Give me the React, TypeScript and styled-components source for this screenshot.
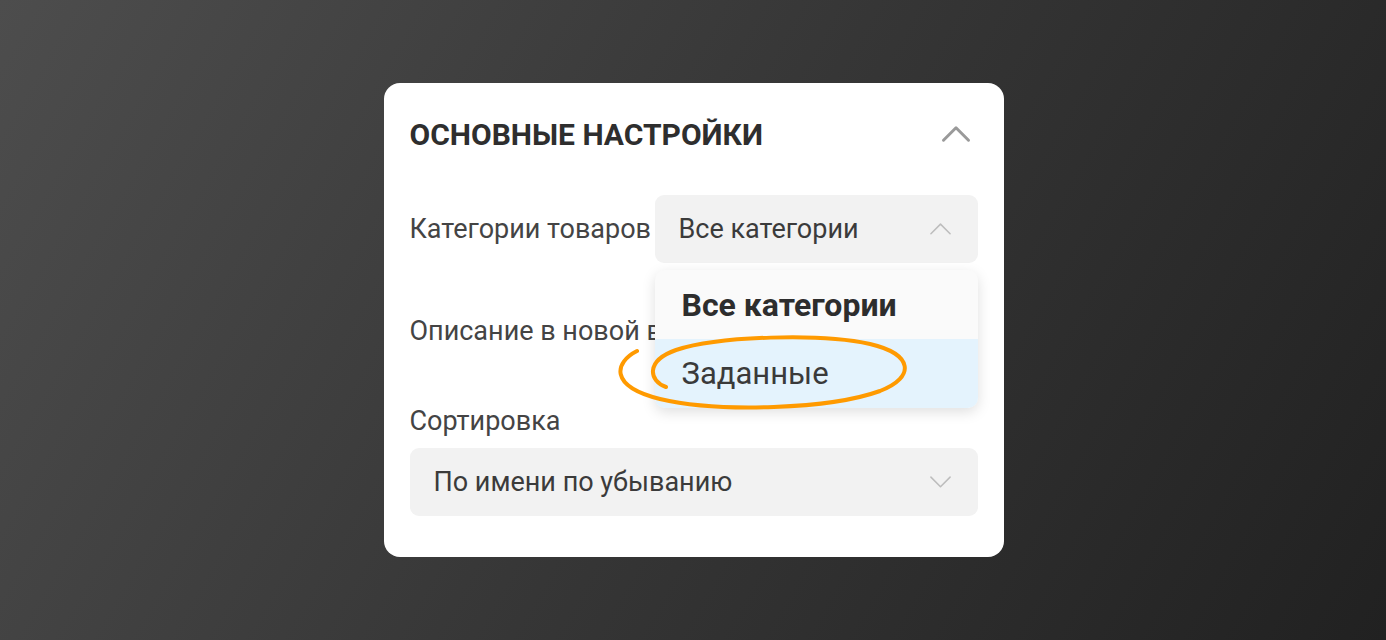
import styled, { createGlobalStyle } from 'styled-components';

const GlobalStyle = createGlobalStyle`
    html, body {
        margin: 0;
        padding: 0;
    }
    body {
        font-family: Roboto, 'Noto Sans', 'Liberation Sans', sans-serif;
        -webkit-font-smoothing: antialiased;
    }
`;

const Page = styled.div`
    width: 1386px;
    height: 640px;
    display: flex;
    align-items: flex-start;
    justify-content: center;
    padding: 83px 0 0 1px;
    box-sizing: border-box;
    background: linear-gradient(120deg, #4d4d4d 0%, #363636 50%, #212121 100%);
    overflow: hidden;
`;

const Card = styled.div`
    position: relative;
    width: 620px;
    box-sizing: border-box;
    padding: 31px 26px 41px;
    background: #fff;
    border-radius: 16px;
    display: flex;
    flex-direction: column;
`;

const Header = styled.div`
    height: 40px;
    display: flex;
    align-items: center;
    justify-content: space-between;
    padding-right: 7px;
`;

const Title = styled.h2`
    margin: 0;
    font-size: 30px;
    font-weight: 700;
    color: #2e2e2e;
`;

const Row = styled.div<{ $mt: number }>`
    margin-top: ${p => p.$mt}px;
    height: 68px;
    display: flex;
    align-items: center;
`;

const Label = styled.span`
    flex: 1;
    white-space: nowrap;
    overflow: hidden;
    font-size: 27px;
    color: #444;
`;

const SelectWrap = styled.div<{ $width?: number }>`
    position: relative;
    width: ${p => (p.$width ? `${p.$width}px` : '100%')};
    flex-shrink: 0;
`;

const SelectBox = styled.div`
    height: 68px;
    box-sizing: border-box;
    padding: 0 26px 0 24px;
    display: flex;
    align-items: center;
    justify-content: space-between;
    background: #f2f2f2;
    border-radius: 9px;
    font-size: 27px;
    color: #3b3b3b;
`;

const Menu = styled.div`
    position: absolute;
    left: 0;
    right: 0;
    top: 75px;
    z-index: 2;
    background: #fafafa;
    border-radius: 10px;
    overflow: hidden;
    box-shadow: 0 4px 14px rgba(0, 0, 0, 0.13);
`;

const MenuItem = styled.div<{ $active?: boolean; $bold?: boolean }>`
    height: 69px;
    display: flex;
    align-items: center;
    padding-left: 27px;
    font-size: ${p => (p.$bold ? 32 : 31)}px;
    font-weight: ${p => (p.$bold ? 700 : 400)};
    color: ${p => (p.$bold ? '#2d2d2d' : '#3a3a3a')};
    background: ${p => (p.$active ? '#e4f3fd' : 'transparent')};
`;

const Toggle = styled.div`
    flex-shrink: 0;
    width: 48px;
    height: 26px;
    border-radius: 13px;
    background: #d9d9d9;
`;

const SortBlock = styled.div`
    margin-top: 41px;
    display: flex;
    flex-direction: column;
    gap: 12px;
`;

const SortLabel = styled.span`
    font-size: 27px;
    line-height: 30px;
    color: #444;
`;

const Scribble = styled.svg`
    position: absolute;
    left: 0;
    top: 0;
    width: 620px;
    height: 474px;
    pointer-events: none;
    z-index: 3;
`;

const Chevron = ({ up, color, size, stroke }: { up?: boolean; color: string; size: number; stroke: number }) => (
    <svg width={size} height={size * 0.6} viewBox="0 0 24 14" fill="none">
        <path
            d={up ? 'M2 12 L12 2 L22 12' : 'M2 2 L12 12 L22 2'}
            stroke={color}
            strokeWidth={stroke}
            strokeLinecap="round"
            strokeLinejoin="round"
        />
    </svg>
);

export default function App() {
    return (
        <>
            <GlobalStyle />
            <Page>
                <Card>
                    <Header>
                        <Title>ОСНОВНЫЕ НАСТРОЙКИ</Title>
                        <Chevron up color="#9a9a9a" size={30} stroke={2.4} />
                    </Header>

                    <Row $mt={41}>
                        <Label>Категории товаров</Label>
                        <SelectWrap $width={323}>
                            <SelectBox>
                                Все категории
                                <Chevron up color="#bdbdbd" size={23} stroke={1.6} />
                            </SelectBox>
                            <Menu>
                                <MenuItem $bold>Все категории</MenuItem>
                                <MenuItem $active>Заданные</MenuItem>
                            </Menu>
                        </SelectWrap>
                    </Row>

                    <Row $mt={34}>
                        <Label>Описание в новой вкладке</Label>
                        <Toggle />
                    </Row>

                    <SortBlock>
                        <SortLabel>Сортировка</SortLabel>
                        <SelectWrap>
                            <SelectBox>
                                По имени по убыванию
                                <Chevron color="#bdbdbd" size={23} stroke={1.6} />
                            </SelectBox>
                        </SelectWrap>
                    </SortBlock>

                    <Scribble viewBox="0 0 620 474">
                        <path
                            transform="translate(-384 -83)"
                            d="M637 351 C615 362 608 386 660 399 C720 413 830 409 880 391 C916 377 913 354 870 344 C820 333 720 336 676 350 C645 361 649 381 666 387"
                            fill="none"
                            stroke="#ff9a00"
                            strokeWidth={4}
                            strokeLinecap="round"
                            strokeLinejoin="round"
                        />
                    </Scribble>
                </Card>
            </Page>
        </>
    );
}
